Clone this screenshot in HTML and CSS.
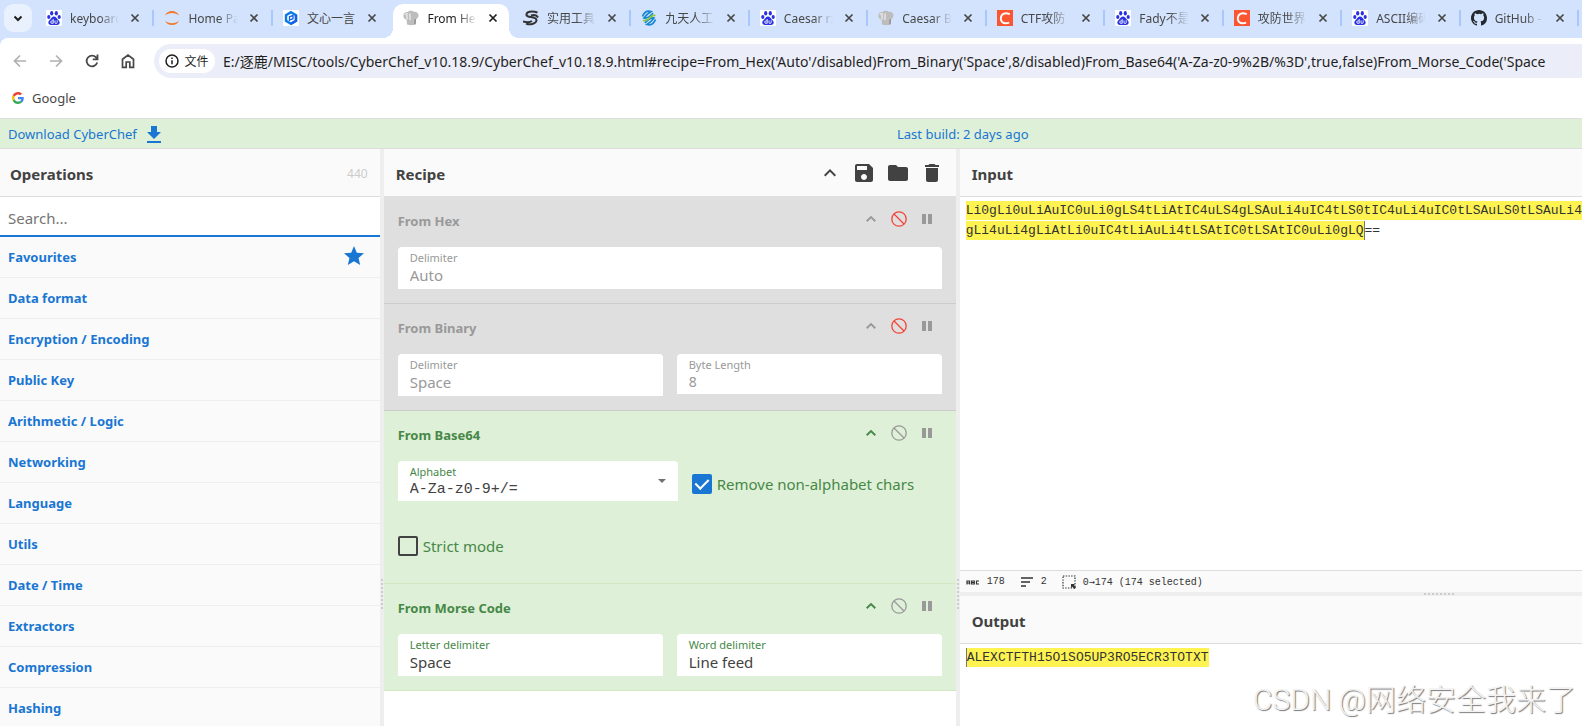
FILE: index.html
```html
<!DOCTYPE html>
<html lang="zh-CN">
<head>
<meta charset="utf-8">
<title>From Hex - CyberChef</title>
<link rel="stylesheet" href="styles.css">
</head>
<body>
<svg class="sprite" aria-hidden="true">
  <symbol id="paw" viewBox="0 0 16 16"><rect width="16" height="16" rx="1" fill="#fff"/><g fill="#2932e1"><ellipse cx="5.700" cy="3.300" rx="1.600" ry="2.200"/><ellipse cx="10.300" cy="3.300" rx="1.600" ry="2.200"/><ellipse cx="2.800" cy="6.900" rx="1.600" ry="2"/><ellipse cx="13.200" cy="6.900" rx="1.600" ry="2"/><path d="M8 6.500c1.900 0 2.600 1.800 3.800 2.900 1.500 1.300 2.300 2.600 1.700 4-.8 2-3.300 1.600-5.500 1.600s-4.700.4-5.500-1.600c-.6-1.400.2-2.700 1.700-4C5.400 8.300 6.100 6.500 8 6.500z"/></g><path d="M7.200 9v4.500M7.200 11.500a1.300 1.300 0 1 0-.1 1.400M9 10.500v2q0 1 1 1t1.200-1v-2.200" fill="none" stroke="#fff" stroke-width=".9"/></symbol>
  <symbol id="chef" viewBox="0 0 16 16"><path d="M3.500 9.500C1 9 0 7 .5 4.800 1 2.600 2.700 1.700 4.500 2 6 .3 9.500.2 11 1.800c2.200-.4 4.300.9 4.500 3.200.1 2-.8 3.500-2.500 4.200l-.4 5.300q-4.500 1.600-8.600 0z" fill="#bdbdbd"/><path d="M4 9.500V5M7 10V3.500M2 5q1-2 3-1" stroke="#e6e6e6" stroke-width="1.500" fill="none"/><path d="M11.500 9.500l-.3 5 1.400-.4.5-5z" fill="#8d8d8d"/></symbol>
  <symbol id="redc" viewBox="0 0 16 16"><rect width="16" height="16" fill="#fc5531"/><path d="M12.800 4.200Q7 1.800 4.600 5.400 2.800 9 5 11.900q2.800 2.200 7.200.7" fill="none" stroke="#fff" stroke-width="1.900"/></symbol>
  <symbol id="x" viewBox="0 0 10 10"><path d="M1.500 1.500l7 7M8.500 1.500l-7 7" stroke="currentColor" stroke-width="1.700"/></symbol>
  <symbol id="up" viewBox="0 0 24 24"><path fill="currentColor" d="M7.410 15.410L12 10.830l4.590 4.580L18 14l-6-6-6 6z"/></symbol>
  <symbol id="chev" viewBox="0 0 16 16"><path fill="none" stroke="currentColor" stroke-width="1.900" d="M3.700 10.200L8 6l4.300 4.200"/></symbol>
  <symbol id="ban" viewBox="0 0 16 16"><g fill="none" stroke="currentColor" stroke-width="1.300"><circle cx="8" cy="8" r="7.200"/><path d="M3 3l10 10"/></g></symbol>
  <symbol id="pause" viewBox="0 0 16 16"><path fill="currentColor" d="M3 3h4v10H3zM9 3h4v10H9z"/></symbol>
</svg>

<header class="browser">
  <nav class="tabs" aria-label="Tabs">
    <button class="tab-search" aria-label="Search tabs"><svg viewBox="0 0 12 12"><path d="M2.500 4.500L6 8l3.500-3.500" fill="none" stroke="#1f1f1f" stroke-width="2"/></svg></button>
    <div class="tab"><svg class="fav"><use href="#paw"/></svg><a href="#">keyboarc</a><button aria-label="Close"><svg><use href="#x"/></svg></button></div>
    <div class="tab"><svg class="fav" viewBox="0 0 16 16"><path d="M1 5.500C3-.5 13-.5 15 5.500 12 2 4 2 1 5.500zM1 10.500c2 6 12 6 14 0-3 3.500-11 3.500-14 0z" fill="#f37726"/></svg><a href="#">Home Pa</a><button aria-label="Close"><svg><use href="#x"/></svg></button></div>
    <div class="tab before"><svg class="fav" viewBox="0 0 16 16"><rect width="16" height="16" rx="1" fill="#fff"/><path d="M8 2.200l5 2.900v5.800l-5 2.900-5-2.900V5.100z" fill="none" stroke="#0b7be8" stroke-width="2.400"/><path d="M8 13.800l5-2.900V5.100" fill="none" stroke="#1462e5" stroke-width="2.400"/><path d="M6.500 11V6.800L10 5.500v3.200L6.500 10" fill="none" stroke="#1462e5" stroke-width="1.300"/></svg><a class="full" href="#">文心一言</a><button aria-label="Close"><svg><use href="#x"/></svg></button></div>
    <div class="tab active"><svg class="fav"><use href="#chef"/></svg><a href="#">From He</a><button aria-label="Close"><svg><use href="#x"/></svg></button></div>
    <div class="tab"><svg class="fav" viewBox="0 0 16 16"><path d="M14.500 2.500C9 .5 3 1.500 3.500 5c.4 3 9.500 1 10 5 .3 3.200-6 5.500-10.500 3.500M0 11.500q6 1.800 9-.5M8 5.500q5-1.500 7 2" fill="none" stroke="#333" stroke-width="2"/></svg><a href="#">实用工具</a><button aria-label="Close"><svg><use href="#x"/></svg></button></div>
    <div class="tab"><svg class="fav" viewBox="0 0 16 16"><g fill="none" stroke-width="1.700"><path d="M1.500 6.500Q4 0 10 1.500 6 4 3 8q4 1 9-5M14.500 9.500Q12 16 6 14.500 10 12 13 8q-4-1-9 5" stroke="#1685d3"/><path d="M2 10.500Q6 11 9 7.500 11 5 14.500 5.500" stroke="#8dc63f"/></g></svg><a href="#">九天人工</a><button aria-label="Close"><svg><use href="#x"/></svg></button></div>
    <div class="tab"><svg class="fav"><use href="#paw"/></svg><a href="#">Caesar rz</a><button aria-label="Close"><svg><use href="#x"/></svg></button></div>
    <div class="tab"><svg class="fav"><use href="#chef"/></svg><a href="#">Caesar B</a><button aria-label="Close"><svg><use href="#x"/></svg></button></div>
    <div class="tab"><svg class="fav"><use href="#redc"/></svg><a href="#">CTF攻防</a><button aria-label="Close"><svg><use href="#x"/></svg></button></div>
    <div class="tab"><svg class="fav"><use href="#paw"/></svg><a href="#">Fady不是</a><button aria-label="Close"><svg><use href="#x"/></svg></button></div>
    <div class="tab"><svg class="fav"><use href="#redc"/></svg><a href="#">攻防世界</a><button aria-label="Close"><svg><use href="#x"/></svg></button></div>
    <div class="tab"><svg class="fav"><use href="#paw"/></svg><a href="#">ASCII编码</a><button aria-label="Close"><svg><use href="#x"/></svg></button></div>
    <div class="tab"><svg class="fav" viewBox="0 0 16 16"><path fill="#24292f" d="M8 0C3.580 0 0 3.580 0 8c0 3.540 2.290 6.530 5.470 7.590.4.070.55-.17.55-.38 0-.19-.01-.82-.01-1.490-2.010.37-2.530-.49-2.690-.94-.09-.23-.48-.94-.82-1.130-.28-.15-.68-.52-.01-.53.63-.01 1.080.58 1.230.82.72 1.210 1.870.87 2.330.66.07-.52.28-.87.51-1.070-1.780-.2-3.640-.89-3.640-3.950 0-.87.31-1.590.82-2.150-.08-.2-.36-1.020.08-2.120 0 0 .67-.21 2.200.82a7.600 7.600 0 0 1 4 0c1.530-1.040 2.200-.82 2.200-.82.44 1.100.16 1.920.08 2.120.51.56.82 1.270.82 2.150 0 3.070-1.870 3.750-3.650 3.950.29.25.54.73.54 1.480 0 1.070-.01 1.930-.01 2.200 0 .21.15.46.55.38A8.010 8.010 0 0 0 16 8c0-4.420-3.580-8-8-8z"/></svg><a href="#">GitHub -</a><button aria-label="Close"><svg><use href="#x"/></svg></button></div>
  </nav>
  <div class="toolbar">
    <button class="nav-btn dim" aria-label="Back"><svg viewBox="0 0 16 16"><path d="M14 8H3M8 2.500L2.500 8 8 13.500" fill="none" stroke="currentColor" stroke-width="1.700"/></svg></button>
    <button class="nav-btn dim" aria-label="Forward"><svg viewBox="0 0 16 16"><path d="M2 8h11M8 2.500L13.500 8 8 13.500" fill="none" stroke="currentColor" stroke-width="1.700"/></svg></button>
    <button class="nav-btn" aria-label="Reload"><svg viewBox="0 0 16 16"><path d="M13.200 9.500A5.400 5.400 0 1 1 12 4.300L13.300 5.700M13.500 1.500v4.800H8.800" fill="none" stroke="currentColor" stroke-width="1.800"/></svg></button>
    <button class="nav-btn" aria-label="Home"><svg viewBox="0 0 16 16"><path d="M2.500 14.300V6.200L8 2l5.500 4.200v8.100H9.800V9H6.200v5.300z" fill="none" stroke="currentColor" stroke-width="1.700"/></svg></button>
    <div class="omnibox">
      <button class="chip"><svg viewBox="0 0 14 14"><circle cx="7" cy="7" r="6" fill="none" stroke="#1f1f1f" stroke-width="1.500"/><path d="M7 6.200v4M7 3.500v1.500" stroke="#1f1f1f" stroke-width="1.500"/></svg>文件</button>
      <input class="url" aria-label="Address" value="E:/逐鹿/MISC/tools/CyberChef_v10.18.9/CyberChef_v10.18.9.html#recipe=From_Hex('Auto'/disabled)From_Binary('Space',8/disabled)From_Base64('A-Za-z0-9%2B/%3D',true,false)From_Morse_Code('Space">
    </div>
  </div>
  <div class="bookmarks">
    <svg viewBox="0 0 48 48"><path fill="#ea4335" d="M24 9.500c3.540 0 6.710 1.220 9.210 3.600l6.850-6.850C35.900 2.380 30.470 0 24 0 14.620 0 6.510 5.380 2.560 13.220l7.980 6.190C12.430 13.720 17.740 9.500 24 9.500z"/><path fill="#4285f4" d="M46.980 24.550c0-1.570-.15-3.090-.38-4.550H24v9.020h12.940c-.58 2.960-2.260 5.480-4.780 7.180l7.730 6c4.510-4.180 7.090-10.360 7.090-17.650z"/><path fill="#fbbc05" d="M10.530 28.590c-.48-1.450-.76-2.990-.76-4.590s.27-3.140.76-4.590l-7.980-6.190C.92 16.460 0 20.120 0 24c0 3.880.92 7.540 2.560 10.780z"/><path fill="#34a853" d="M24 48c6.480 0 11.930-2.130 15.890-5.810l-7.730-6c-2.150 1.450-4.920 2.300-8.160 2.300-6.260 0-11.570-4.220-13.470-9.910l-7.980 6.190C6.510 42.620 14.620 48 24 48z"/></svg>
    <a href="#">Google</a>
  </div>
</header>

<div class="banner">
  <a class="download" href="#">Download CyberChef <svg viewBox="0 0 14 18"><path d="M4 0h6v6h4l-7 7-7-7h4zM0 15h14v2H0z" fill="currentColor"/></svg></a>
  <a class="build" href="#">Last build: 2 days ago</a>
</div>

<main class="workspace">
  <section class="operations">
    <div class="title"><h2>Operations</h2><span class="count">440</span></div>
    <input class="search" type="search" placeholder="Search..." aria-label="Search operations">
    <ul class="categories">
      <li><a href="#">Favourites</a><svg viewBox="0 0 24 24"><path fill="currentColor" d="M12 17.270L18.180 21l-1.640-7.030L22 9.240l-7.190-.61L12 2 9.190 8.630 2 9.240l5.460 4.730L5.820 21z"/></svg></li>
      <li><a href="#">Data format</a></li>
      <li><a href="#">Encryption / Encoding</a></li>
      <li><a href="#">Public Key</a></li>
      <li><a href="#">Arithmetic / Logic</a></li>
      <li><a href="#">Networking</a></li>
      <li><a href="#">Language</a></li>
      <li><a href="#">Utils</a></li>
      <li><a href="#">Date / Time</a></li>
      <li><a href="#">Extractors</a></li>
      <li><a href="#">Compression</a></li>
      <li><a href="#">Hashing</a></li>
    </ul>
  </section>
  <div class="splitter"><span class="grip"></span></div>
  <section class="recipe">
    <div class="title"><h2>Recipe</h2>
      <div class="actions">
        <button aria-label="Hide arguments"><svg><use href="#up"/></svg></button>
        <button aria-label="Save recipe"><svg viewBox="0 0 24 24"><path fill="currentColor" d="M17 3H5c-1.110 0-2 .9-2 2v14c0 1.100.89 2 2 2h14c1.100 0 2-.9 2-2V7l-4-4zm-5 16c-1.660 0-3-1.340-3-3s1.340-3 3-3 3 1.340 3 3-1.340 3-3 3zm3-10H5V5h10v4z"/></svg></button>
        <button aria-label="Load recipe"><svg viewBox="0 0 24 24"><path fill="currentColor" d="M10 4H4c-1.100 0-2 .9-2 2v12c0 1.100.9 2 2 2h16c1.100 0 2-.9 2-2V8c0-1.100-.9-2-2-2h-8l-2-2z"/></svg></button>
        <button aria-label="Clear recipe"><svg viewBox="0 0 24 24"><path fill="currentColor" d="M6 19c0 1.100.9 2 2 2h8c1.100 0 2-.9 2-2V7H6v12zM19 4h-3.500l-1-1h-5l-1 1H5v2h14V4z"/></svg></button>
      </div>
    </div>
    <article class="op disabled">
      <div class="op-head"><h3>From Hex</h3><div class="op-icons"><button aria-label="Collapse"><svg><use href="#chev"/></svg></button><button class="ban" aria-label="Enable"><svg><use href="#ban"/></svg></button><button aria-label="Breakpoint"><svg><use href="#pause"/></svg></button></div></div>
      <div class="args"><label class="field"><span>Delimiter</span><select><option>Auto</option></select></label></div>
    </article>
    <article class="op disabled">
      <div class="op-head"><h3>From Binary</h3><div class="op-icons"><button aria-label="Collapse"><svg><use href="#chev"/></svg></button><button class="ban" aria-label="Enable"><svg><use href="#ban"/></svg></button><button aria-label="Breakpoint"><svg><use href="#pause"/></svg></button></div></div>
      <div class="args"><label class="field"><span>Delimiter</span><select><option>Space</option></select></label><label class="field short"><span>Byte Length</span><input value="8"></label></div>
    </article>
    <article class="op tall">
      <div class="op-head"><h3>From Base64</h3><div class="op-icons"><button aria-label="Collapse"><svg><use href="#chev"/></svg></button><button class="ban" aria-label="Disable"><svg><use href="#ban"/></svg></button><button aria-label="Breakpoint"><svg><use href="#pause"/></svg></button></div></div>
      <div class="args"><label class="field short combo"><span>Alphabet</span><input value="A-Za-z0-9+/="></label><label class="check"><input type="checkbox" checked>Remove non-alphabet chars</label></div>
      <label class="check strict"><input type="checkbox">Strict mode</label>
    </article>
    <article class="op">
      <div class="op-head"><h3>From Morse Code</h3><div class="op-icons"><button aria-label="Collapse"><svg><use href="#chev"/></svg></button><button class="ban" aria-label="Disable"><svg><use href="#ban"/></svg></button><button aria-label="Breakpoint"><svg><use href="#pause"/></svg></button></div></div>
      <div class="args"><label class="field"><span>Letter delimiter</span><select><option>Space</option></select></label><label class="field"><span>Word delimiter</span><select><option>Line feed</option></select></label></div>
    </article>
  </section>
  <div class="splitter"><span class="grip"></span></div>
  <section class="io">
    <div class="title"><h2>Input</h2></div>
    <div class="editor input-text">
      <div><mark>Li0gLi0uLiAuIC0uLi0gLS4tLiAtIC4uLS4gLSAuLi4uIC4tLS0tIC4uLi4uIC0tLSAuLS0tLSAuLi4g</mark></div>
      <div><mark class="caret-end">gLi4uLi4gLiAtLi0uIC4tLiAuLi4tLSAtIC0tLSAtIC0uLi0gLQ</mark>==</div>
    </div>
    <div class="status">
      <span class="stat"><svg viewBox="0 0 14 14"><path d="M1 9.500V6h2.500v3.500M1 8h2.500M5.500 6v3h2.800V6zM5.500 7.500h2.800M13 6h-2.500v3H13" fill="none" stroke="#333" stroke-width="1.200"/></svg>178</span>
      <span class="stat"><svg viewBox="0 0 14 14"><path d="M1 3h12M1 7h9M1 11h5" stroke="#333" stroke-width="1.700"/></svg>2</span>
      <span class="stat"><svg viewBox="0 0 14 14"><path d="M1 1h12v12H1z" fill="none" stroke="#333" stroke-width="1.200" stroke-dasharray="1.400 1.300"/><path d="M9 9h4l-1.200 1.200L14 12.500 12.500 14l-2.300-2.200L9 13z" fill="#333"/></svg><span>0<span class="arrow">→</span>174 (174 selected)</span></span>
    </div>
    <div class="splitter horizontal"><span class="grip"></span></div>
    <div class="title"><h2>Output</h2></div>
    <div class="editor"><div><mark class="caret-start">ALEXCTFTH15O1SO5UP3RO5ECR3TOTXT</mark></div></div>
    <div class="watermark">CSDN @网络安全我来了</div>
  </section>
</main>
</body>
</html>
```
FILE: styles.css
```css
* { box-sizing: border-box; }

body {
  margin: 0;
  height: 100vh;
  display: flex;
  flex-direction: column;
  overflow: hidden;
  background: #fff;
  color: #424242;
  font-family: "Noto Sans", "Noto Sans CJK SC", sans-serif;
  font-size: 14px;
}

button {
  display: flex;
  align-items: center;
  justify-content: center;
  padding: 0;
  border: 0;
  background: none;
  color: inherit;
  font: inherit;
}

a { color: inherit; text-decoration: none; }
h2, h3 { margin: 0; }
.sprite { display: none; }

/* Browser chrome */
.browser { flex: none; background: #d3e3fd; }

.tabs {
  display: flex;
  height: 38px;
  padding: 4px 3px 0 4px;
}
.tab-search {
  flex: none;
  width: 28px;
  height: 28px;
  margin-right: 4px;
  border-radius: 9px;
  background: #e9f1fe;
}
.tab-search svg { width: 12px; height: 12px; }

.tab {
  position: relative;
  flex: 1;
  min-width: 0;
  height: 34px;
  padding: 0 14px 6px 10px;
  display: flex;
  align-items: center;
  color: #474747;
  font-size: 12px;
}
.tab::after {
  content: "";
  position: absolute;
  right: 0;
  top: 6px;
  width: 2px;
  height: 16px;
  background: #a8c7fa;
}
.tab.before::after, .tab.active::after { display: none; }
.tab a {
  flex: 1;
  min-width: 0;
  margin: 0 11px 0 8px;
  white-space: nowrap;
  mask-image: linear-gradient(90deg, #000 60%, transparent);
}
.tab a.full { mask-image: none; }
.tab button svg { width: 10px; height: 10px; }
.tab.active {
  margin-left: 2px;
  margin-right: 4px;
  padding-right: 11px;
  border-radius: 10px 10px 0 0;
  background: #fff;
  color: #1f1f1f;
}
.tab.active::before {
  content: "";
  position: absolute;
  left: -10px;
  right: -10px;
  bottom: 0;
  height: 10px;
  background:
    radial-gradient(circle at 0 0, transparent 10px, #fff 10px) left / 10px 10px no-repeat,
    radial-gradient(circle at 100% 0, transparent 10px, #fff 10px) right / 10px 10px no-repeat;
}
.fav { flex: none; width: 16px; height: 16px; }

.toolbar {
  display: flex;
  align-items: center;
  height: 46px;
  padding-left: 10px;
  border-radius: 8px 0 0 0;
  background: #fff;
}
.nav-btn { flex: none; width: 20px; margin-right: 16px; color: #474747; }
.nav-btn svg { width: 16px; height: 16px; }
.nav-btn.dim { color: #b0b0b0; }
.omnibox {
  flex: 1;
  display: flex;
  align-items: center;
  height: 34px;
  padding-left: 5px;
  border-radius: 17px 0 0 17px;
  background: #ebeef8;
}
.chip {
  flex: none;
  gap: 5px;
  width: 56px;
  height: 24px;
  border-radius: 12px;
  background: #fff;
  color: #1f1f1f;
  font-size: 12px;
}
.chip svg { width: 14px; height: 14px; }
.url {
  flex: 1;
  min-width: 0;
  margin-left: 8px;
  padding: 0;
  border: 0;
  outline: 0;
  background: none;
  color: #1f1f1f;
  font: inherit;
}

.bookmarks {
  display: flex;
  align-items: center;
  gap: 8px;
  height: 34px;
  padding: 0 12px 6px;
  background: #fff;
  color: #474747;
  font-size: 13px;
}
.bookmarks svg { width: 12px; height: 12px; }

/* Banner */
.banner {
  flex: none;
  display: grid;
  grid-template-columns: 897px 1fr;
  align-items: center;
  height: 31px;
  border-top: 1px solid #ddd;
  border-bottom: 1px solid #ddd;
  background: #dff0d8;
  color: #1976d2;
  font-size: 13px;
}
.download { display: flex; align-items: center; gap: 10px; padding-left: 8px; }
.download svg { width: 14px; height: 18px; margin-top: 3px; }

/* Panes */
.workspace { flex: 1; min-height: 0; display: flex; }
.operations { flex: 0 0 24%; overflow: hidden; background: #fafafa; }
.recipe { flex: 0 0 572px; overflow: hidden; }
.io { flex: 1; min-width: 0; position: relative; display: flex; flex-direction: column; overflow: hidden; }

.splitter { flex: 0 0 4px; padding: 430px 1px 0; background: #eee; }
.grip {
  display: block;
  width: 2px;
  height: 30px;
  background: repeating-linear-gradient(#ccc 0 2px, transparent 2px 4px);
}
.splitter.horizontal { display: flex; justify-content: flex-end; padding: 1px 128px 0 0; }
.horizontal .grip { width: 30px; height: 2px; background: repeating-linear-gradient(90deg, #ccc 0 2px, transparent 2px 4px); }

.title {
  flex: none;
  display: flex;
  align-items: center;
  justify-content: space-between;
  height: 48px;
  padding: 2px 12px 0;
  border-bottom: 1px solid #ddd;
  background: #fafafa;
}
.title h2 { font-size: 15px; line-height: 20px; }
.operations .title { padding-left: 10px; }
.recipe .title { border-color: #dfdfdf; }
.count { color: #ccc; font-size: 12px; }
.actions { display: flex; gap: 10px; margin-top: -2px; }
.actions button, .actions svg { width: 24px; height: 24px; }

.search {
  display: block;
  width: 100%;
  height: 40px;
  padding: 4px 8px 0;
  border: 0;
  border-bottom: 2px solid #1976d2;
  outline: 0;
  border-radius: 0;
  background: #fff;
  font: inherit;
  font-size: 15px;
  appearance: none;
}
.search::placeholder { color: #757575; opacity: 1; }

.categories { margin: 0; padding: 0; list-style: none; color: #1976d2; font-size: 13px; font-weight: 700; }
.categories li {
  display: flex;
  align-items: center;
  justify-content: space-between;
  height: 41px;
  padding: 0 14px 0 8px;
  border-bottom: 1px solid #eee;
}
.categories svg { width: 24px; height: 24px; margin-top: -2px; }

/* Recipe operations */
.op { height: 107px; padding: 0 14px; border-bottom: 1px solid #d3e8c0; background: #dff0d8; color: #468847; }
.op.tall { height: 173px; }
.op.disabled { border-color: #ccc; background: #dfdfdf; color: #999; }
.op-head { display: flex; align-items: center; justify-content: space-between; height: 50px; padding-bottom: 2px; }
.op h3 { font-size: 13px; line-height: 20px; }
.op-icons { display: flex; gap: 12px; margin: -4px 7px 0 0; }
.op-icons svg { width: 16px; height: 16px; }
.op-icons button { color: #999; }
.op-icons button:first-child { color: inherit; }
.disabled .op-icons .ban { color: #f44336; }

.args { display: flex; gap: 14px; }
.field {
  flex: 1;
  min-width: 0;
  display: flex;
  flex-direction: column;
  height: 42px;
  padding: 3px 12px 0;
  border-radius: 4px 4px 0 0;
  background: #fff;
  font-size: 11px;
  line-height: 15px;
}
.field.short { height: 40px; }
.field select, .field input {
  width: 100%;
  height: 20px;
  padding: 0;
  border: 0;
  outline: 0;
  background: none;
  appearance: none;
  color: #424242;
  font-family: inherit;
  font-size: 15px;
}
.field.short input { height: 18px; font-size: 14px; }
.disabled .field select, .disabled .field input { color: #999; }
.field.combo {
  flex: 0 0 280px;
  position: relative;
}
.field.combo input { height: 20px; font-family: "Liberation Mono", monospace; font-size: 15px; }
.combo::after {
  content: "";
  position: absolute;
  right: 12px;
  top: 18px;
  border: 4px solid transparent;
  border-top-color: #6e7277;
  border-bottom: 0;
}
.check { display: flex; align-items: center; gap: 5px; height: 46px; font-size: 15px; }
.check.strict { height: 30px; margin-top: 24px; }
.check input {
  flex: none;
  width: 20px;
  height: 20px;
  margin: 0;
  border: 2px solid #424242;
  border-radius: 2px;
  appearance: none;
}
.check input:checked { display: grid; place-items: center; border-color: #1976d2; background: #1976d2; }
.check input:checked::after {
  content: "";
  width: 6px;
  height: 11px;
  margin-bottom: 3px;
  border: solid #fff;
  border-width: 0 2px 2px 0;
  transform: rotate(45deg);
}

/* Input and output */
.editor {
  flex: 1;
  padding: 4px 0 0 6px;
  overflow: hidden;
  color: #333;
  font-family: "Liberation Mono", monospace;
  font-size: 13px;
  line-height: 20px;
  white-space: nowrap;
}
.editor.input-text { flex: 0 0 373px; }
mark { padding: 2px 0; background: #fff352; color: inherit; }
.caret-end { border-right: 1px solid #777; }
.caret-start { border-left: 1px solid #777; }

.status {
  flex: none;
  display: flex;
  gap: 15px;
  height: 22px;
  padding-left: 6px;
  border-top: 1px solid #ddd;
  background: #fafafa;
  color: #333;
  font-family: "Liberation Mono", monospace;
  font-size: 10px;
}
.stat { display: flex; align-items: center; gap: 7px; }
.stat svg { width: 14px; height: 14px; }
.arrow { font-family: "DejaVu Sans Mono", monospace; }

.watermark {
  position: absolute;
  right: 6px;
  bottom: 4px;
  color: #f2f2f2;
  font-family: Roboto, "Noto Sans CJK SC", sans-serif;
  font-size: 30px;
  font-weight: 300;
  line-height: 45px;
  white-space: nowrap;
  text-shadow: 1px 1px 1px #777;
}
```
